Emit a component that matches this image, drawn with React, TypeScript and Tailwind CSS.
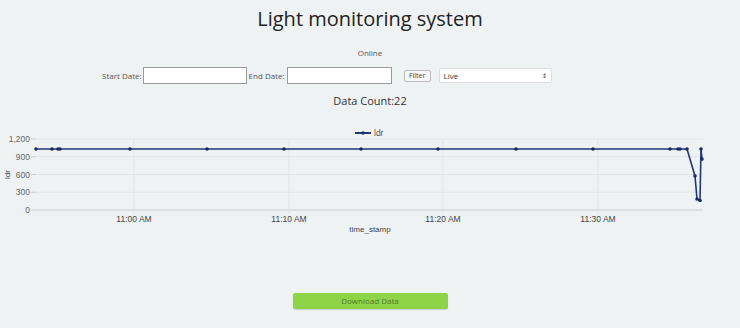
const points: [number, number][] = [
  [36, 1030], [52, 1030], [58, 1030], [60, 1030], [130, 1030], [207, 1030],
  [284, 1030], [361, 1030], [438, 1030], [516, 1030], [593, 1030], [670, 1030],
  [678, 1030], [680, 1030], [687, 1030], [695, 575], [697, 185], [700, 160],
  [701, 1030], [702, 860],
];

const top = 122;
const yOf = (v: number) => 210 - (v * 71) / 1200 - top;

function Chart() {
  const yTicks = [0, 300, 600, 900, 1200];
  const xTicks: [number, string][] = [
    [134, "11:00 AM"],
    [289, "11:10 AM"],
    [443, "11:20 AM"],
    [598, "11:30 AM"],
  ];
  const path = points.map(([x, v], i) => `${i ? "L" : "M"}${x} ${yOf(v)}`).join(" ");
  return (
    <svg width={740} height={112} className="block" style={{ fontFamily: "'Liberation Sans', Arial, sans-serif" }}>
      {/* legend */}
      <line x1={355} y1={11} x2={371} y2={11} stroke="#23367a" strokeWidth={2} />
      <circle cx={363} cy={11} r={1.8} fill="#1c2a66" />
      <text x={374} y={14} fontSize={8.5} fill="#555">ldr</text>

      {/* grid */}
      {yTicks.map((t) => (
        <g key={t}>
          <line x1={36} x2={703} y1={yOf(t)} y2={yOf(t)} stroke={t === 0 ? "#c8cccf" : "#e1e5e8"} strokeWidth={1} />
          <line x1={31} x2={36} y1={yOf(t)} y2={yOf(t)} stroke="#c8cccf" />
          <text x={30} y={yOf(t) + 3} fontSize={8.5} fill="#666" textAnchor="end">
            {t.toLocaleString("en-US")}
          </text>
        </g>
      ))}
      {xTicks.map(([x, label]) => (
        <g key={label}>
          <line x1={x} x2={x} y1={yOf(1200)} y2={yOf(0) + 4} stroke="#e1e5e8" />
          <text x={x} y={yOf(0) + 12} fontSize={8.5} fill="#444" textAnchor="middle">
            {label}
          </text>
        </g>
      ))}
      <text x={370} y={yOf(0) + 22} fontSize={8} fill="#444" textAnchor="middle">time_stamp</text>
      <text x={0} y={0} fontSize={8} fill="#444" textAnchor="middle" transform={`translate(10 ${yOf(600)}) rotate(-90)`}>
        ldr
      </text>

      {/* series */}
      <path d={path} fill="none" stroke="#23367a" strokeWidth={1.6} strokeLinejoin="round" />
      {points.map(([x, v], i) => (
        <circle key={i} cx={x} cy={yOf(v)} r={1.8} fill="#1c2a66" />
      ))}
    </svg>
  );
}

export default function App() {
  return (
    <div className="flex h-[328px] w-[740px] flex-col items-center overflow-hidden bg-[#eef2f3] font-['Liberation_Sans',Arial,sans-serif] text-[#333]">
      <h1 className="mt-[6px] font-['Open_Sans',sans-serif] text-[20px] leading-[26px] text-[#222]">
        Light monitoring system
      </h1>
      <p className="mt-[16px] font-['Open_Sans',sans-serif] text-[8px] leading-[10px] text-[#555]">Online</p>
      <div className="mt-[9px] flex items-center self-start pl-[102px] font-['Open_Sans',sans-serif] text-[8px] text-[#555]">
        <label className="mr-[1px]">Start Date:</label>
        <input className="h-[17px] w-[104px] border border-[#999] bg-white" />
        <label className="ml-[2px] mr-[2px]">End Date:</label>
        <input className="h-[17px] w-[105px] border border-[#999] bg-white" />
        <button className="ml-[12px] h-[12px] w-[27px] rounded-[2px] border border-[#bbb] bg-[#f7f7f7] text-[7px] leading-[10px] text-[#444]">
          Filter
        </button>
        <div className="ml-[8px] flex h-[15px] w-[113px] items-center justify-between rounded-[2px] border border-[#ddd] bg-white px-[4px] text-[8px] text-[#333]">
          <span>Live</span>
          <span className="text-[6px] leading-[6px]">⇕</span>
        </div>
      </div>
      <p className="mt-[10px] font-['Open_Sans',sans-serif] text-[11px] leading-[14px] text-[#333]">Data Count:22</p>
      <div className="mt-[14px]">
        <Chart />
      </div>
      <button className="mt-[59px] h-[16px] w-[155px] rounded-[2px] bg-[#8fd447] font-['Open_Sans',sans-serif] text-[8px] text-[#4e7a2c] shadow-[0_1px_1px_rgba(0,0,0,0.15)]">
        Download Data
      </button>
    </div>
  );
}
